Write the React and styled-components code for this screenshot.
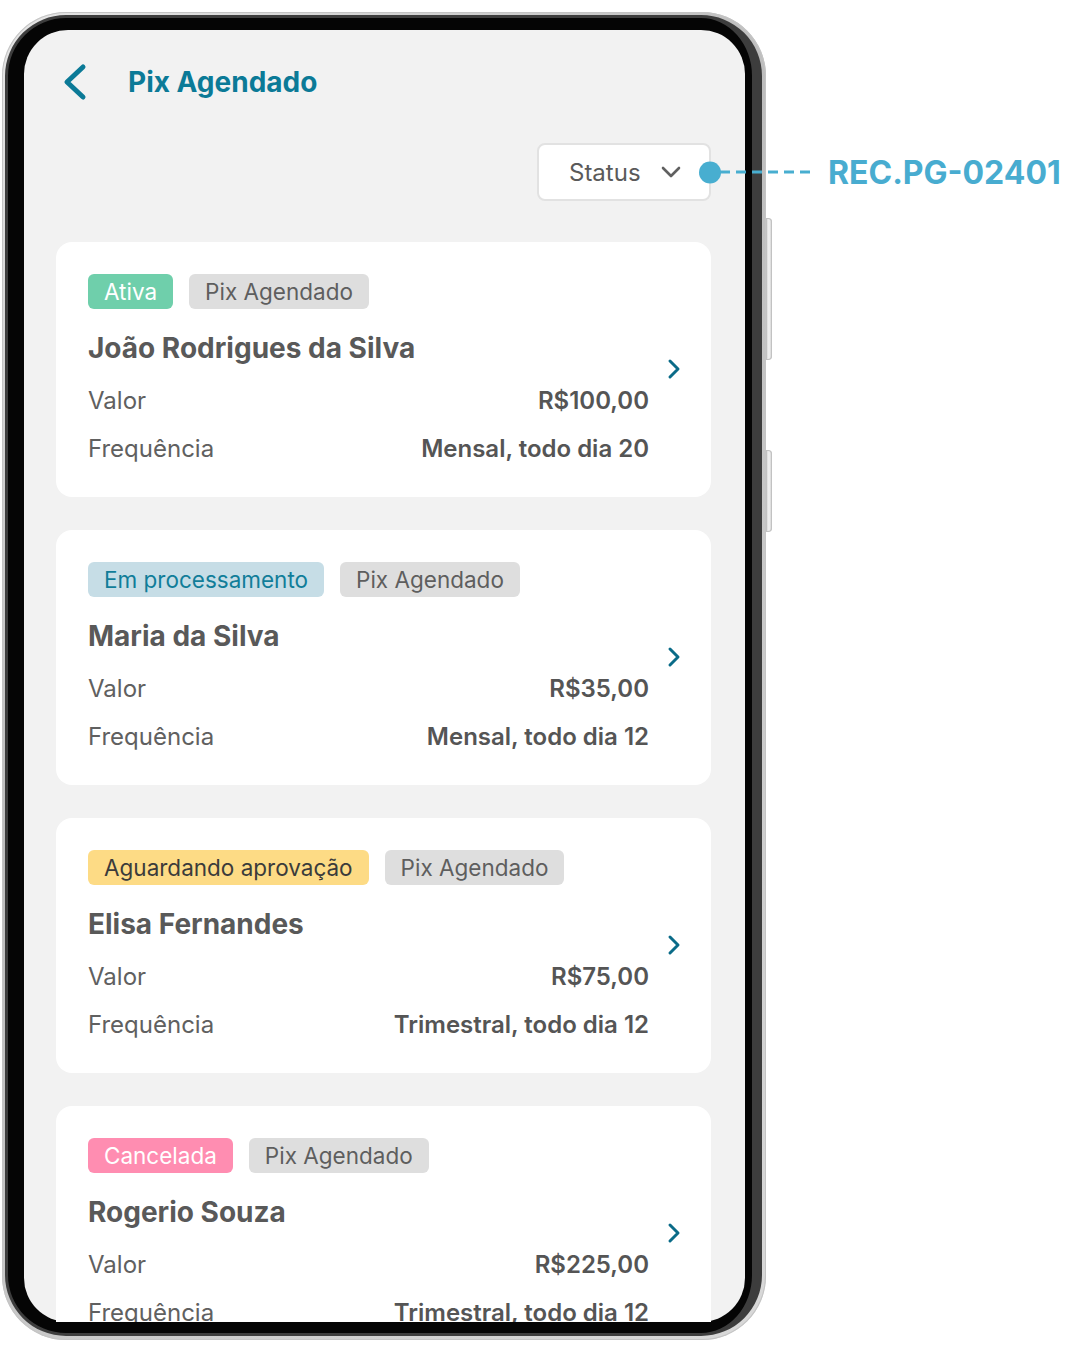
import React from "react";
import styled, { createGlobalStyle } from "styled-components";

const GlobalStyle = createGlobalStyle`
  html, body {
    margin: 0;
    padding: 0;
    background: #ffffff;
  }
  body {
    font-family: "Inter", "Noto Sans", sans-serif;
    -webkit-font-smoothing: antialiased;
  }
`;

const schedules = [
  {
    id: 1,
    status: "Ativa",
    tone: "active",
    name: "João Rodrigues da Silva",
    value: "R$100,00",
    frequency: "Mensal, todo dia 20",
  },
  {
    id: 2,
    status: "Em processamento",
    tone: "processing",
    name: "Maria da Silva",
    value: "R$35,00",
    frequency: "Mensal, todo dia 12",
  },
  {
    id: 3,
    status: "Aguardando aprovação",
    tone: "pending",
    name: "Elisa Fernandes",
    value: "R$75,00",
    frequency: "Trimestral, todo dia 12",
  },
  {
    id: 4,
    status: "Cancelada",
    tone: "cancelled",
    name: "Rogerio Souza",
    value: "R$225,00",
    frequency: "Trimestral, todo dia 12",
  },
];

const tones = {
  active: { bg: "#6fcfab", color: "#ffffff" },
  processing: { bg: "#c6dde6", color: "#117d99" },
  pending: { bg: "#fddb85", color: "#3b3b3b" },
  cancelled: { bg: "#ff8db1", color: "#ffffff" },
  neutral: { bg: "#dedede", color: "#5e5e5e" },
};

const BackIcon = () => (
  <svg width="26" height="40" viewBox="0 0 26 40" fill="none">
    <path
      d="M21 5 L5 20 L21 35"
      stroke="#0b7a97"
      strokeWidth="5"
      strokeLinecap="round"
      strokeLinejoin="round"
    />
  </svg>
);

const DownIcon = () => (
  <svg width="20" height="12" viewBox="0 0 20 12" fill="none">
    <path
      d="M2 2 L10 10 L18 2"
      stroke="#606060"
      strokeWidth="2.6"
      strokeLinecap="round"
      strokeLinejoin="round"
    />
  </svg>
);

const NextIcon = () => (
  <svg width="14" height="22" viewBox="0 0 14 22" fill="none">
    <path
      d="M3 3 L11 11 L3 19"
      stroke="#0a6b88"
      strokeWidth="3"
      strokeLinecap="round"
      strokeLinejoin="round"
    />
  </svg>
);

const App = () => {
  return (
    <>
      <GlobalStyle />
      <Page>
        <Phone>
          <SideButton top="206px" height="142px" />
          <SideButton top="438px" height="82px" />
          <Bezel>
            <Screen>
              <Header>
                <BackButton aria-label="Voltar">
                  <BackIcon />
                </BackButton>
                <Title>Pix Agendado</Title>
              </Header>

              <Toolbar>
                <StatusButton>
                  <span>Status</span>
                  <DownIcon />
                  <Annotation>
                    <Dot />
                    <Dashes />
                    <Code>REC.PG-02401</Code>
                  </Annotation>
                </StatusButton>
              </Toolbar>

              <List>
                {schedules.map((item) => (
                  <Card key={item.id}>
                    <CardBody>
                      <Tags>
                        <Tag tone={item.tone}>{item.status}</Tag>
                        <Tag tone="neutral">Pix Agendado</Tag>
                      </Tags>
                      <Name>{item.name}</Name>
                      <Row>
                        <Label>Valor</Label>
                        <Value>{item.value}</Value>
                      </Row>
                      <Row>
                        <Label>Frequência</Label>
                        <Value>{item.frequency}</Value>
                      </Row>
                    </CardBody>
                    <Chevron>
                      <NextIcon />
                    </Chevron>
                  </Card>
                ))}
              </List>
            </Screen>
          </Bezel>
        </Phone>
      </Page>
    </>
  );
};

export default App;

const Page = styled.div`
  padding: 12px 0 0 2px;
  width: 1066px;
  height: 1352px;
  box-sizing: border-box;
`;

const Phone = styled.div`
  position: relative;
  width: 764px;
  height: 1328px;
  box-sizing: border-box;
  padding: 3px 4px 4px 3px;
  border-radius: 64px;
  background: linear-gradient(135deg, #e6e6e6 0%, #bdbdbd 40%, #d9d9d9 100%);
  box-shadow: inset 0 0 0 1px #c4c4c4;
`;

const SideButton = styled.div`
  position: absolute;
  right: -6px;
  top: ${(p) => p.top};
  width: 6px;
  height: ${(p) => p.height};
  border-radius: 0 4px 4px 0;
  background: linear-gradient(90deg, #cfcfcf, #f4f4f4 50%, #c9c9c9);
  box-shadow: inset 0 0 0 1px #c2c2c2;
`;

const Bezel = styled.div`
  height: 100%;
  box-sizing: border-box;
  border-style: solid;
  border-color: #3d3d3d;
  border-width: 3px 10px 3px 3px;
  padding: 12px 7px 11px 16px;
  border-radius: 61px;
  background: #050505;
`;

const Screen = styled.div`
  position: relative;
  display: flex;
  flex-direction: column;
  width: 721px;
  height: 1292px;
  border-radius: 44px;
  background: #f2f2f2;
  box-sizing: border-box;
  padding: 0 34px 0 32px;
`;

const Header = styled.header`
  display: flex;
  align-items: center;
  gap: 40px;
  height: 64px;
  margin-top: 20px;
  padding-left: 6px;
`;

const BackButton = styled.button`
  display: flex;
  align-items: center;
  padding: 0;
  border: none;
  background: none;
  cursor: pointer;
`;

const Title = styled.h1`
  margin: 0;
  font-size: 28px;
  font-weight: 700;
  color: #0b7a97;
`;

const Toolbar = styled.div`
  display: flex;
  justify-content: flex-end;
  margin-top: 29px;
`;

const StatusButton = styled.button`
  position: relative;
  display: flex;
  align-items: center;
  justify-content: space-between;
  width: 174px;
  height: 58px;
  box-sizing: border-box;
  padding: 0 28px 0 30px;
  border: 2px solid #e2e2e2;
  border-radius: 8px;
  background: #ffffff;
  font-family: inherit;
  font-size: 24px;
  color: #5a5a5a;
  cursor: pointer;
`;

const Annotation = styled.div`
  position: absolute;
  left: calc(100% - 10px);
  top: 50%;
  transform: translateY(-50%);
  display: flex;
  align-items: center;
  z-index: 5;
  pointer-events: none;
`;

const Dot = styled.span`
  width: 22px;
  height: 22px;
  border-radius: 50%;
  background: #48aed0;
  flex-shrink: 0;
`;

const Dashes = styled.span`
  width: 96px;
  height: 3px;
  background: repeating-linear-gradient(
    90deg,
    #48aed0 0 10px,
    transparent 10px 16px
  );
  margin-left: -1px;
`;

const Code = styled.span`
  margin-left: 12px;
  font-size: 32px;
  font-weight: 700;
  color: #48acd0;
  white-space: nowrap;
`;

const List = styled.div`
  flex: 1;
  display: flex;
  flex-direction: column;
  gap: 33px;
  margin-top: 41px;
  overflow: hidden;
`;

const Card = styled.article`
  display: flex;
  align-items: center;
  flex-shrink: 0;
  height: 255px;
  box-sizing: border-box;
  padding: 32px 30px 33px 32px;
  border-radius: 16px;
  background: #ffffff;
`;

const CardBody = styled.div`
  flex: 1;
  display: flex;
  flex-direction: column;
`;

const Tags = styled.div`
  display: flex;
  gap: 16px;
`;

const Tag = styled.span`
  display: inline-block;
  height: 35px;
  padding: 0 16px;
  border-radius: 6px;
  font-size: 22.5px;
  line-height: 35px;
  background: ${(p) => tones[p.tone].bg};
  color: ${(p) => tones[p.tone].color};
`;

const Name = styled.h2`
  margin: 21px 0 18px;
  font-size: 28px;
  line-height: 36px;
  font-weight: 700;
  color: #595959;
`;

const Row = styled.div`
  display: flex;
  justify-content: space-between;
  align-items: center;
  height: 32px;
  & + & {
    margin-top: 16px;
  }
`;

const Label = styled.span`
  font-size: 24px;
  color: #606060;
`;

const Value = styled.span`
  font-size: 24px;
  font-weight: 600;
  color: #555555;
`;

const Chevron = styled.div`
  display: flex;
  align-items: center;
  margin-left: 18px;
`;
